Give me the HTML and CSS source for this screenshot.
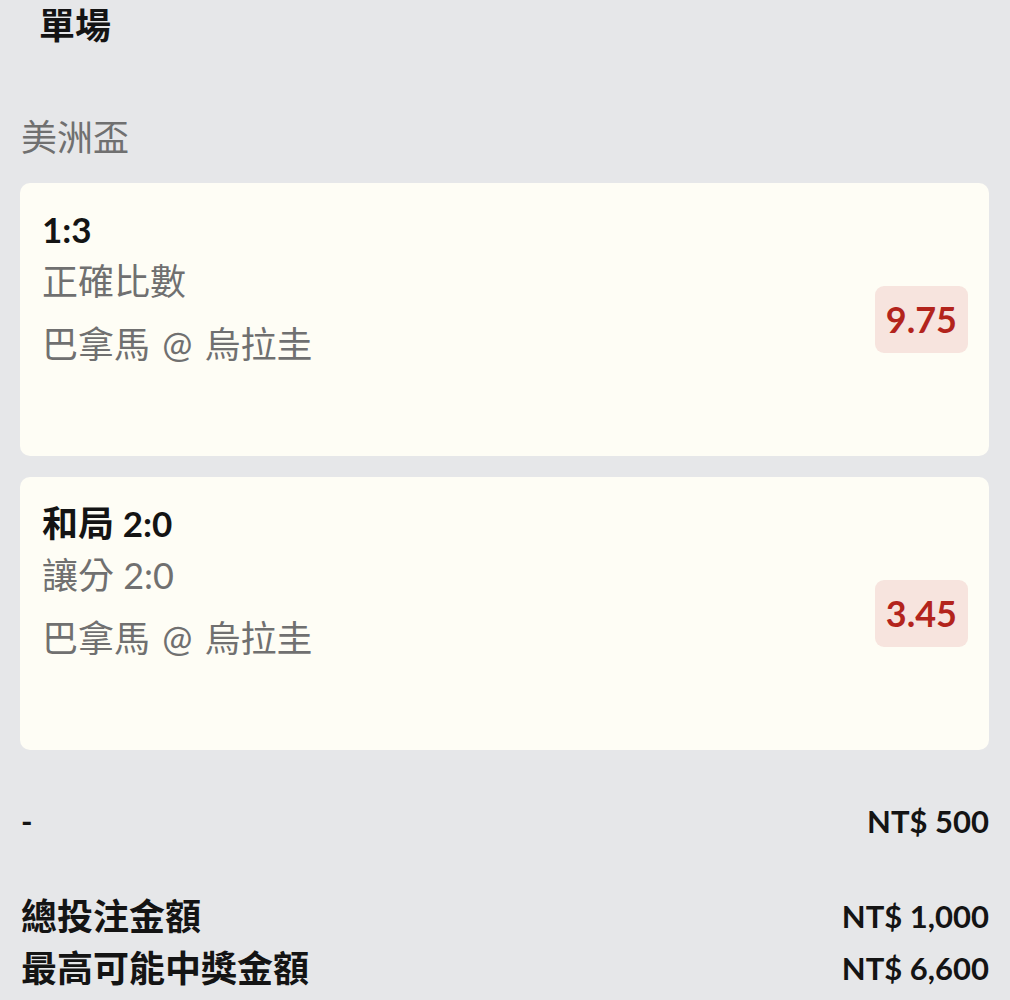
FILE: index.html
```html
<!DOCTYPE html>
<html lang="zh-Hant">
<head>
<meta charset="utf-8">
<title>單場</title>
<link rel="stylesheet" href="styles.css">
</head>
<body>
<div class="page">
  <h1 class="sheet-title">單場</h1>
  <div class="league">美洲盃</div>
  <div class="bets">
    <div class="bet-card">
      <div class="bet-info">
        <div class="bet-pick"><span class="lat">1:3</span></div>
        <div class="bet-market">正確比數</div>
        <div class="bet-match">巴拿馬 @ 烏拉圭</div>
      </div>
      <div class="odds">9.75</div>
    </div>
    <div class="bet-card">
      <div class="bet-info">
        <div class="bet-pick">和局 <span class="lat">2:0</span></div>
        <div class="bet-market">讓分 2:0</div>
        <div class="bet-match">巴拿馬 @ 烏拉圭</div>
      </div>
      <div class="odds">3.45</div>
    </div>
  </div>
  <div class="summary">
    <div class="row row-stake">
      <span class="label">-</span>
      <span class="amount">NT$ 500</span>
    </div>
    <div class="totals">
      <div class="row">
        <span class="label">總投注金額</span>
        <span class="amount">NT$ 1,000</span>
      </div>
      <div class="row">
        <span class="label">最高可能中獎金額</span>
        <span class="amount">NT$ 6,600</span>
      </div>
    </div>
  </div>
</div>
</body>
</html>
```

FILE: styles.css
```css
html, body {
  margin: 0;
  padding: 0;
  background: #e6e7e9;
}

body {
  font-family: "Lato", "Noto Sans CJK TC", sans-serif;
  font-size: 36px;
  color: #141414;
}

.page {
  width: 1010px;
  height: 1000px;
  box-sizing: border-box;
  padding: 0 21px 0 20px;
  overflow: hidden;
}

.sheet-title {
  margin: 0 0 0 19px;
  font-size: 36px;
  font-weight: 700;
  line-height: 50px;
}

.league {
  margin-top: 61px;
  line-height: 52px;
  color: #707070;
  padding-left: 1px;
}

.bets {
  margin-top: 20px;
  display: flex;
  flex-direction: column;
  gap: 21px;
}

.bet-card {
  background: #fefdf5;
  border-radius: 10px;
  min-height: 273px;
  box-sizing: border-box;
  padding: 24px 21px 24px 22px;
  display: flex;
  justify-content: space-between;
  align-items: flex-start;
}

.bet-pick {
  font-weight: 700;
  line-height: 44px;
}

.bet-pick .lat {
  font-size: 35px;
}

.bet-market,
.bet-match {
  color: #707070;
  line-height: 61px;
}

.bet-match {
  margin-top: 2px;
  word-spacing: 3px;
}

.odds {
  align-self: center;
  background: #f7e4de;
  color: #b3241c;
  border-radius: 9px;
  height: 67px;
  line-height: 67px;
  padding: 0 11px;
  font-size: 36px;
  font-weight: 700;
}

.summary {
  margin-top: 45px;
}

.row {
  display: flex;
  justify-content: space-between;
  align-items: center;
  line-height: 52px;
  font-weight: 700;
  padding-left: 1px;
}

.row-stake .label {
  font-size: 31px;
}

.amount {
  font-size: 31px;
}

.totals {
  margin-top: 43px;
}
```
